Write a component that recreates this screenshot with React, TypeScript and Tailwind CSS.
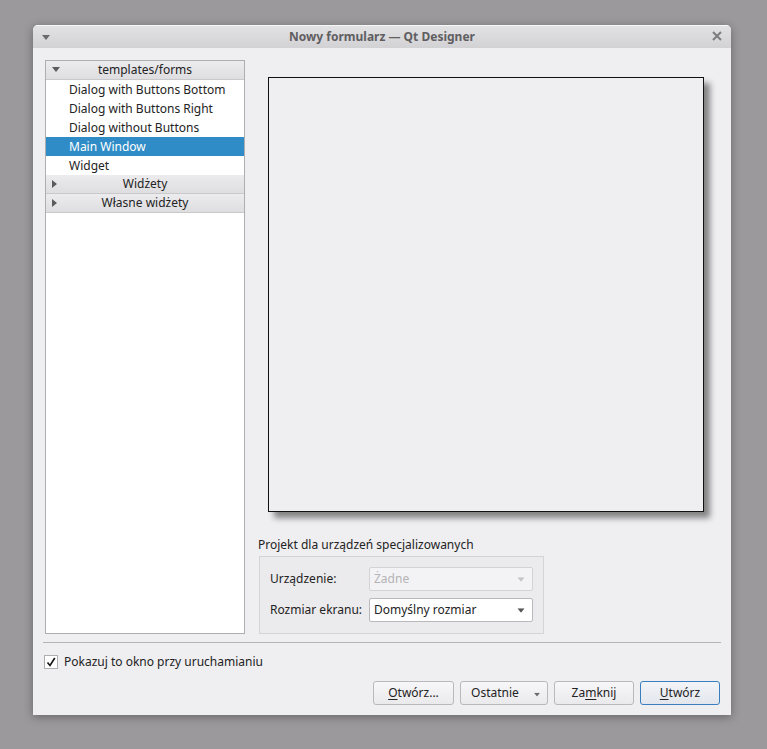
import React from 'react';

const font = { fontFamily: '"Noto Sans", "DejaVu Sans", sans-serif' };

function Caret({ dir = 'down', className = '' }: { dir?: 'down' | 'right'; className?: string }) {
  return dir === 'down' ? (
    <svg width="8" height="5" viewBox="0 0 8 5" className={className}>
      <path d="M0 0h8L4 5z" fill="currentColor" />
    </svg>
  ) : (
    <svg width="5" height="8" viewBox="0 0 5 8" className={className}>
      <path d="M0 0v8l5-4z" fill="currentColor" />
    </svg>
  );
}

function TreeHeader({ label, open }: { label: string; open?: boolean }) {
  return (
    <div className="relative flex h-[19px] items-center justify-center border-b border-[#c9c8cb] bg-gradient-to-b from-[#ecebee] to-[#dedde0] text-[12px] text-[#232323]">
      <span className="absolute left-[6px] top-[6px] text-[#5b5b5d]">
        {open ? <Caret /> : <Caret dir="right" className="mt-[-1px]" />}
      </span>
      {label}
    </div>
  );
}

function TreeItem({ label, selected }: { label: string; selected?: boolean }) {
  return (
    <div
      className={
        'flex h-[19px] items-center pl-[23px] text-[12px] ' +
        (selected ? 'bg-[#308cc6] text-white' : 'text-[#232323]')
      }
    >
      {label}
    </div>
  );
}

function Button({
  children,
  width,
  primary,
  menu,
}: {
  children: React.ReactNode;
  width: string;
  primary?: boolean;
  menu?: boolean;
}) {
  return (
    <div
      className={
        'relative flex h-[24px] items-center justify-center rounded-[3px] border text-[12px] text-[#232323] ' +
        width +
        (primary
          ? ' border-[#3a7ebf] bg-gradient-to-b from-[#f2f4f8] to-[#e3e6ec]'
          : ' border-[#b9b8bb] bg-gradient-to-b from-[#f7f6f8] to-[#eae9ec]')
      }
    >
      <span className={menu ? 'mr-[18px]' : ''}>{children}</span>
      {menu && (
        <span className="absolute right-[6px] top-[10px] text-[#6a6a6c]">
          <Caret className="scale-75" />
        </span>
      )}
    </div>
  );
}

function Combo({ value, disabled }: { value: string; disabled?: boolean }) {
  return (
    <div
      className={
        'flex h-[24px] w-[164px] shrink-0 items-center justify-between rounded-[2px] border pl-[4px] pr-[7px] text-[12px] ' +
        (disabled
          ? 'border-[#d3d2d5] bg-[#f3f2f4] text-[#b4b3b6]'
          : 'border-[#b9b8bb] bg-white text-[#232323]')
      }
    >
      <span>{value}</span>
      <span className={disabled ? 'text-[#c4c3c6]' : 'text-[#555557]'}>
        <Caret className="scale-90" />
      </span>
    </div>
  );
}

export default function App() {
  return (
    <div className="h-[749px] w-[767px] overflow-hidden bg-[#9b999c] pl-[33px] pt-[25px]" style={font}>
      <div className="flex h-[690px] w-[698px] flex-col overflow-hidden rounded-t-[5px] bg-[#efeef0] shadow-[0_2px_10px_rgba(0,0,0,0.35)]">
        {/* title bar */}
        <div className="relative flex h-[23px] items-center justify-center border-t border-[#f7f7f8] bg-gradient-to-b from-[#e2e1e4] to-[#d2d1d4] text-[12px] font-bold text-[#5f5e61]">
          <span className="absolute left-[9px] top-[9px] text-[#6b6a6d]">
            <Caret />
          </span>
          Nowy formularz — Qt Designer
          <span className="absolute right-[9px] top-[5px] text-[#7d7c7f]">
            <svg width="10" height="10" viewBox="0 0 10 10">
              <path d="M1 1l8 8M9 1l-8 8" stroke="currentColor" strokeWidth="2" />
            </svg>
          </span>
        </div>

        {/* body */}
        <div className="flex flex-1 flex-col pl-[10px] pr-[11px] pt-[12px]">
          <div className="flex h-[574px]">
            {/* tree */}
            <div className="ml-[2px] flex w-[200px] flex-col border border-[#aeadb0] bg-white">
              <TreeHeader label="templates/forms" open />
              <TreeItem label="Dialog with Buttons Bottom" />
              <TreeItem label="Dialog with Buttons Right" />
              <TreeItem label="Dialog without Buttons" />
              <TreeItem label="Main Window" selected />
              <TreeItem label="Widget" />
              <TreeHeader label="Widżety" />
              <TreeHeader label="Własne widżety" />
            </div>

            {/* right side */}
            <div className="flex flex-1 flex-col">
              <div className="flex-1 pl-[23px] pt-[17px]">
                <div className="h-[435px] w-[436px] border border-[#111] bg-[#efeef0] shadow-[6px_6px_6px_rgba(0,0,0,0.45)]" />
              </div>
              <div className="pl-[13px] text-[12px] text-[#232323]">Projekt dla urządzeń specjalizowanych</div>
              <div className="ml-[14px] mt-[2px] flex h-[78px] w-[285px] flex-col gap-[7px] border border-[#d4d3d6] bg-[#ebeaec] pl-[10px] pt-[10px] text-[12px] text-[#232323]">
                <div className="flex items-center whitespace-nowrap">
                  <span className="w-[99px] shrink-0">Urządzenie:</span>
                  <Combo value="Żadne" disabled />
                </div>
                <div className="flex items-center whitespace-nowrap">
                  <span className="w-[99px] shrink-0">Rozmiar ekranu:</span>
                  <Combo value="Domyślny rozmiar" />
                </div>
              </div>
            </div>
          </div>

          <div className="mt-[8px] h-px w-[678px] bg-[#b4b3b6]" />

          <div className="mt-[12px] flex h-[14px] items-center gap-[6px] pl-[1px] text-[12px] text-[#232323]">
            <span className="flex h-[14px] w-[14px] items-center justify-center border border-[#aeadb0] bg-white">
              <svg width="10" height="10" viewBox="0 0 10 10">
                <path d="M1.5 5.5l2.5 3L8.8 1" stroke="#111" strokeWidth="1.6" fill="none" />
              </svg>
            </span>
            Pokazuj to okno przy uruchamianiu
          </div>

          <div className="mt-[12px] flex justify-end gap-[6px]">
            <Button width="w-[81px]">
              <u className="underline-offset-2">O</u>twórz...
            </Button>
            <Button width="w-[88px]" menu>
              Ostatnie
            </Button>
            <Button width="w-[80px]">
              Za<u className="underline-offset-2">m</u>knij
            </Button>
            <Button width="w-[80px]" primary>
              <u className="underline-offset-2">U</u>twórz
            </Button>
          </div>
        </div>
      </div>
    </div>
  );
}
